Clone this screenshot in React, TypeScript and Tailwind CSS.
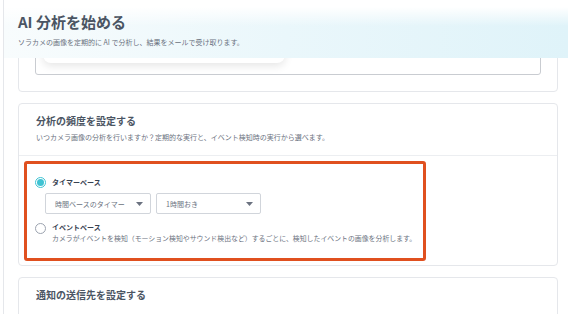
import React from "react";

function Caret() {
  return (
    <svg width="7" height="4" viewBox="0 0 7 4" className="shrink-0">
      <path d="M0 0 L7 0 L3.5 4 Z" fill="#6b7280" />
    </svg>
  );
}

function Select({ label, width }: { label: string; width: string }) {
  return (
    <div
      className={`${width} h-[21px] border border-[#d1d5db] rounded-[2px] bg-white flex items-center justify-between pl-[9px] pr-[7px]`}
    >
      <span className="text-[7px] leading-[10px] text-[#6b7280]">{label}</span>
      <Caret />
    </div>
  );
}

export default function App() {
  return (
    <div className="relative w-[571px] h-[314px] overflow-hidden bg-white pl-[3px] font-['Noto_Sans_CJK_JP','Noto_Sans',sans-serif]">
      <div className="h-full border-l border-[#e5e7eb] pl-[14px]">
        <div className="w-[540px] flex flex-col gap-[11px]">
          {/* Card 1 (scrolled, mostly hidden) */}
          <div className="-mt-[40px] h-[132px] border border-[#e5e7eb] rounded-[4px] bg-white px-[16px] pb-[16px] flex flex-col justify-end">
            <div className="h-[100px] border border-[#c9ccd1] rounded-[3px] flex items-end pl-[7px] pb-[11px]">
              <div className="w-[242px] h-[40px] rounded-[8px] bg-white shadow-[0_3px_8px_rgba(0,0,0,0.10)]" />
            </div>
          </div>

          {/* Card 2 */}
          <div className="border border-[#e5e7eb] rounded-[4px] bg-white">
            <div className="px-[17px] pt-[10px] pb-[13px] border-b border-[#eceef1]">
              <div className="text-[10px] leading-[14px] font-bold text-[#4b5563]">
                分析の頻度を設定する
              </div>
              <div className="mt-[4px] text-[7px] leading-[10px] text-[#6b7280]">
                いつカメラ画像の分析を行いますか？定期的な実行と、イベント検知時の実行から選べます。
              </div>
            </div>
            <div className="pt-[5px] pl-[5px] pb-[4px]">
              <div className="w-[402px] h-[100px] border-[3px] border-[#e0501f] rounded-[3px] pl-[8px] pt-[12px]">
                <div className="flex items-center gap-[6px] h-[12px]">
                  <div className="w-[11px] h-[11px] rounded-full border border-[#3fc3d3] flex items-center justify-center bg-white">
                    <div className="w-[7px] h-[7px] rounded-full bg-[#3fc3d3]" />
                  </div>
                  <span className="text-[7px] leading-[10px] font-bold text-[#374151]">
                    タイマーベース
                  </span>
                </div>
                <div className="mt-[5px] ml-[10px] flex gap-[5px]">
                  <Select label="時間ベースのタイマー" width="w-[106px]" />
                  <Select label="1時間おき" width="w-[105px]" />
                </div>
                <div className="mt-[8px] flex items-start gap-[6px]">
                  <div className="mt-[1px] w-[11px] h-[11px] rounded-full border border-[#9ca3af] bg-white shrink-0" />
                  <div className="flex flex-col">
                    <span className="text-[7px] leading-[11px] font-bold text-[#374151]">
                      イベントベース
                    </span>
                    <span className="text-[6.9px] leading-[10px] text-[#6b7280]">
                      カメラがイベントを検知（モーション検知やサウンド検出など）するごとに、検知したイベントの画像を分析します。
                    </span>
                  </div>
                </div>
              </div>
            </div>
          </div>

          {/* Card 3 */}
          <div className="h-[60px] border border-[#e5e7eb] rounded-[4px] bg-white px-[17px] pt-[10px]">
            <div className="text-[10px] leading-[14px] font-bold text-[#4b5563]">
              通知の送信先を設定する
            </div>
          </div>
        </div>
      </div>

      {/* Sticky header overlay */}
      <div className="absolute left-[4px] right-[3px] top-0 h-[58px] bg-[linear-gradient(to_bottom,#ffffff_12%,rgba(255,255,255,0)_45%),linear-gradient(to_right,#f8fcfd,#eaf7fb_50%,#dff3f9)] pl-[14px] pt-[12px]">
        <div className="text-[15px] leading-[20px] font-bold text-[#4b5563]">AI 分析を始める</div>
        <div className="mt-[5px] text-[7px] leading-[10px] text-[#6b7280]">
          ソラカメの画像を定期的に AI で分析し、結果をメールで受け取ります。
        </div>
      </div>
    </div>
  );
}
